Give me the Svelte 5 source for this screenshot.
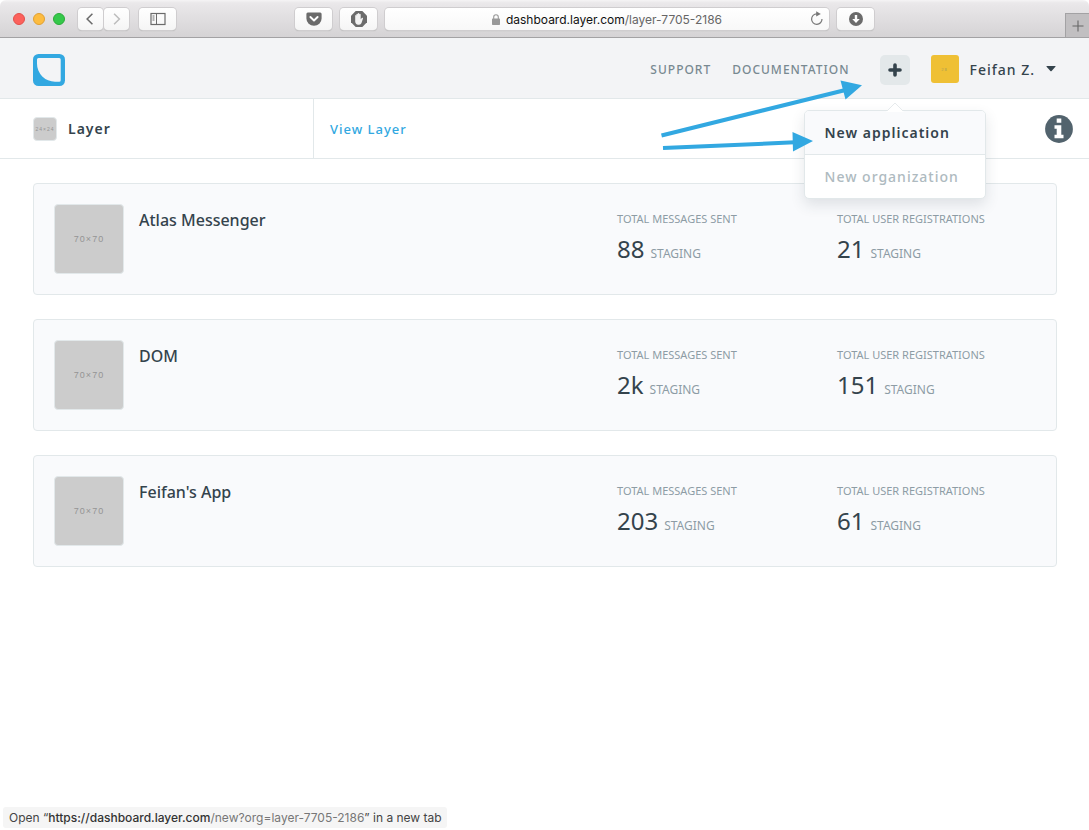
<script>
  const apps = [
    { name: 'Atlas Messenger', messages: '88', users: '21' },
    { name: 'DOM', messages: '2k', users: '151' },
    { name: "Feifan's App", messages: '203', users: '61' },
  ];
</script>

<div class="browser">
  <div class="lights">
    <span class="light red"></span>
    <span class="light amber"></span>
    <span class="light green"></span>
  </div>
  <div class="history">
    <button class="tool narrow" aria-label="Back">
      <svg width="26" height="22" viewBox="0 0 26 22"><path d="M15 5.5 9.5 11l5.5 5.5" fill="none" stroke="#6b6b6b" stroke-width="1.6" /></svg>
    </button>
    <button class="tool narrow" aria-label="Forward">
      <svg width="26" height="22" viewBox="0 0 26 22"><path d="M10.5 5.5 16 11l-5.5 5.5" fill="none" stroke="#bdbdbd" stroke-width="1.6" /></svg>
    </button>
  </div>
  <button class="tool" aria-label="Show sidebar">
    <svg width="16" height="14" viewBox="0 0 16 14"><rect x="1" y="1.5" width="14" height="11" fill="none" stroke="#6b6b6b" stroke-width="1.2" /><path d="M6.500 1.500v11M2.500 4h2M2.500 6h2M2.500 8h2" stroke="#6b6b6b" fill="none" /></svg>
  </button>
  <div class="middle">
    <button class="tool" aria-label="Save to Pocket">
      <svg width="16" height="14" viewBox="0 0 16 14"><path d="M1.800.5h12.400Q15.600.5 15.600 2v4.500a7.600 7.300 0 0 1-15.200 0V2Q.4.5 1.800.5Z" fill="#6b6b6b" /><path d="m4.400 5 3.600 3.500L11.600 5" fill="none" stroke="#fff" stroke-width="1.9" stroke-linecap="round" stroke-linejoin="round" /></svg>
    </button>
    <button class="tool" aria-label="Ad blocker">
      <svg width="16" height="16" viewBox="0 0 16 16"><path d="M4.700 0h6.600L16 4.700v6.600L11.300 16H4.700L0 11.300V4.700Z" fill="#6b6b6b" /><path d="M4.200 8.500V4.500q.6-.8 1.200 0V3.200q.7-1 1.400 0v-.7q.8-1 1.500 0v.7q.9-.8 1.400.3V8.300l1.300-1.500q1.200-.4 1 .8L10.500 12q-.6 1.800-2.400 1.800h-.9Q4.400 13.600 4.200 10.500Z" fill="#f2f2f2" /></svg>
    </button>
    <div class="address">
      <svg width="8" height="11" viewBox="0 0 8 11"><rect y="4.5" width="8" height="6.5" rx=".7" fill="#999" /><path d="M1.700 5V3a2.300 2.300 0 0 1 4.600 0v2" fill="none" stroke="#999" stroke-width="1.1" /></svg>
      <span>dashboard.layer.com<i>/layer-7705-2186</i></span>
      <button class="reload" aria-label="Reload">
        <svg width="14" height="15" viewBox="0 0 14 15"><path d="M12 8a5.200 5.200 0 1 1-5.200-5.100h1" fill="none" stroke="#777" stroke-width="1.2" /><path d="m6.200.3 4.600 2.600-4.600 2.700Z" fill="#777" /></svg>
      </button>
    </div>
    <button class="tool" aria-label="Downloads">
      <svg width="14" height="14" viewBox="0 0 14 14"><circle cx="7" cy="7" r="7" fill="#6b6b6b" /><path d="M5.800 3h2.400v4h2.600L7 11 3.200 7h2.600Z" fill="#fff" /></svg>
    </button>
  </div>
  <button class="new-tab" aria-label="New tab">
    <svg width="12" height="12" viewBox="0 0 12 12"><path d="M6 .5v11M.5 6h11" stroke="#666" stroke-width="1.1" /></svg>
  </button>
</div>

<header>
  <a class="logo" href="#home" aria-label="Layer home">
    <svg width="32" height="32" viewBox="0 0 32 32"><rect width="32" height="32" rx="5.500" fill="#32a8e1" /><path d="M5.500 4h20.700q1.500 0 1.500 1.500v20.700q0 1.500-1.500 1.500H22A18 18 0 0 1 4 9.700V5.500Q4 4 5.500 4Z" fill="#f3f4f6" /></svg>
  </a>
  <nav>
    <a href="#support">SUPPORT</a>
    <a href="#docs">DOCUMENTATION</a>
  </nav>
  <div class="create">
    <button class="plus" aria-label="Create">
      <svg width="14" height="14" viewBox="0 0 14 14"><path d="M7 2v10M2 7h10" stroke="#34434c" stroke-width="3.6" stroke-linecap="round" /></svg>
    </button>
    <div class="menu">
      <svg class="caret" width="18" height="10" viewBox="0 0 18 10"><path d="M0 10 9 1l9 9Z" fill="#fff" /><path d="m1 9 8-8 8 8" fill="none" stroke="#e6eaec" /></svg>
      <button class="item active">New application</button>
      <button class="item">New organization</button>
    </div>
    <svg class="pointers" width="204" height="76" viewBox="658 78 204 76">
      <path d="m661.500 135.500 184-45.500M663 148l132-5.700" stroke="#32a8e1" stroke-width="4" fill="none" />
      <path d="m840.500 80.500 21.500 4.700-16.500 14.300ZM792.500 132l20.500 9-20 10.500Z" fill="#32a8e1" />
    </svg>
  </div>
  <button class="account">
    <span class="avatar"><small>28</small></span>
    <span>Feifan Z.</span>
    <svg width="10" height="6" viewBox="0 0 10 6"><path d="M1 0h8q1 0 .4.800L5.600 5q-.6.600-1.200 0L.6.800Q0 0 1 0Z" fill="#34434c" /></svg>
  </button>
</header>

<div class="subbar">
  <div class="org"><span class="thumb small">24×24</span><b>Layer</b></div>
  <a class="view" href="#view">View Layer</a>
  <button class="info" aria-label="Information">
    <svg width="28" height="28" viewBox="0 0 28 28"><circle cx="14" cy="14" r="13.9" fill="#52636d" /><path d="M11.700 3.500h4.600v4.200h-4.600ZM9.500 10.200h6.800v9.600h2.200v3.500h-9v-3.500h2.200v-6.100H9.500Z" fill="#fff" /></svg>
  </button>
</div>

<main>
  {#each apps as app}
    <article>
      <span class="thumb">70×70</span>
      <h2>{app.name}</h2>
      <section><h3>TOTAL MESSAGES SENT</h3><p><strong>{app.messages}</strong>STAGING</p></section>
      <section><h3>TOTAL USER REGISTRATIONS</h3><p><strong>{app.users}</strong>STAGING</p></section>
    </article>
  {/each}
</main>

<div class="status">Open “<b>https://dashboard.layer.com</b><i>/new?org=layer-7705-2186</i>” in a new tab</div>

<style>
  :global(body) {
    margin: 0;
    background: #fff;
    color: #34434c;
    font-family: 'Noto Sans', sans-serif;
  }
  :global(*) { box-sizing: border-box; }
  svg { display: block; }
  button { font: inherit; color: inherit; border: 0; padding: 0; background: none; }
  a { text-decoration: none; }
  i { font-style: normal; }

  .browser {
    display: flex;
    align-items: center;
    height: 38px;
    padding: 1px 0 0 13px;
    border-bottom: 1px solid #a3a2a4;
    border-radius: 6px 6px 0 0;
    background: linear-gradient(#f5f4f5 0, #eae8ea 3px, #d5d3d5);
    font-family: Inter, sans-serif;
  }
  .lights { display: flex; gap: 8px; margin-right: 13px; }
  .light { width: 12px; height: 12px; border-radius: 50%; border: 1px solid; }
  .red { background: #fc615c; border-color: #e2504b; }
  .amber { background: #fdbc40; border-color: #e0a033; }
  .green { background: #35c84a; border-color: #2aab38; }
  .history { display: flex; gap: 1px; margin-right: 10px; }
  .tool {
    display: flex;
    align-items: center;
    justify-content: center;
    flex: none;
    width: 37px;
    height: 22px;
    border-radius: 4px;
    background: linear-gradient(#fff, #f5f5f5);
    box-shadow: 0 0 0 1px #cfcdcf, 0 1px 1px #aaa;
  }
  .narrow { width: 25px; }
  .middle { display: flex; flex: 1; gap: 8px; margin: 0 191px 0 119px; }
  .address {
    position: relative;
    display: flex;
    flex: 1;
    align-items: center;
    justify-content: center;
    gap: 6px;
    height: 22px;
    border-radius: 4px;
    background: linear-gradient(#fff, #f8f8f8);
    box-shadow: 0 0 0 1px #cfcdcf, 0 1px 1px #aaa;
    font-size: 12px;
    white-space: nowrap;
    color: #111;
  }
  .address i { color: #666; }
  .reload { position: absolute; right: 5px; top: 3px; }
  .new-tab {
    display: flex;
    align-items: center;
    justify-content: center;
    align-self: flex-end;
    width: 24px;
    height: 24px;
    border: 1px solid #a3a2a4;
    border-width: 1px 0 0 1px;
    background: #c1bfc1;
  }

  header {
    display: flex;
    align-items: center;
    justify-content: flex-end;
    height: 61px;
    padding: 4px 33px 0;
    background: #f3f4f6;
    border-bottom: 1px solid #e2e8ea;
  }
  .logo { margin-right: auto; }
  nav { display: flex; gap: 21px; padding-bottom: 2px; }
  nav a { font-size: 12px; font-weight: 500; letter-spacing: 1px; color: #788991; }
  .create { position: relative; z-index: 2; margin: 0 21px 0 30px; }
  .plus {
    display: flex;
    align-items: center;
    justify-content: center;
    width: 30px;
    height: 30px;
    border-radius: 5px;
    background: #e3e8ea;
  }
  .menu {
    position: absolute;
    top: 55px;
    right: -76px;
    width: 182px;
    border: 1px solid #e2e8ea;
    border-radius: 5px;
    background: #fff;
    box-shadow: 0 6px 14px rgba(50, 65, 75, 0.13);
  }
  .caret { position: absolute; top: -9px; left: 81px; }
  .item {
    display: block;
    width: 100%;
    height: 43px;
    padding: 0 20px;
    text-align: left;
    font-size: 14px;
    font-weight: 500;
    letter-spacing: 1px;
    color: #aebac0;
    white-space: nowrap;
  }
  .active {
    height: 44px;
    border-bottom: 1px solid #e2e8ea;
    border-radius: 4px 4px 0 0;
    background: #f9fafc;
    color: #34434c;
    font-weight: 600;
  }
  .pointers { position: absolute; top: 23px; right: 48px; pointer-events: none; }
  .account {
    display: flex;
    align-items: center;
    gap: 11px;
    padding-bottom: 2px;
    font-size: 14px;
    font-weight: 500;
    letter-spacing: 1px;
    white-space: nowrap;
  }
  .avatar {
    display: flex;
    align-items: center;
    justify-content: center;
    width: 28px;
    height: 28px;
    border-radius: 3px;
    background: #efc035;
    color: #b9a450;
  }
  .avatar small { font-size: 4px; }

  .subbar {
    display: flex;
    align-items: center;
    height: 60px;
    padding: 0 16px 0 33px;
    border-bottom: 1px solid #e2e8ea;
  }
  .org {
    display: flex;
    align-items: center;
    align-self: stretch;
    gap: 11px;
    width: 281px;
    border-right: 1px solid #e2e8ea;
    font-size: 14px;
    letter-spacing: 1px;
  }
  .org b { font-weight: 600; }
  .thumb {
    display: flex;
    align-items: center;
    justify-content: center;
    width: 70px;
    height: 70px;
    border: 1px solid #e2e8ea;
    border-radius: 4px;
    background: #ccc;
    color: #949494;
    font-family: 'Liberation Sans Narrow', 'Liberation Sans', sans-serif;
    font-size: 9px;
    letter-spacing: 1px;
  }
  .small { width: 24px; height: 24px; font-size: 5px; }
  .view {
    margin: 0 auto 0 16px;
    font-size: 13px;
    font-weight: 500;
    letter-spacing: 1px;
    color: #32a8e1;
  }

  main { display: grid; gap: 24px; padding: 24px 32px 24px 33px; }
  article {
    display: grid;
    grid-template-columns: 70px 1fr 220px 219px;
    padding: 20px 0 20px 20px;
    border: 1px solid #e2e8ea;
    border-radius: 4px;
    background: #f9fafc;
  }
  h2 { margin: 4px 0 0 15px; font-size: 16px; line-height: 24px; font-weight: 500; }
  h3 { margin: 7px 0 0; font-size: 11px; line-height: 16px; font-weight: 400; color: #8d9ca5; white-space: nowrap; }
  p { margin: 4px 0 0; font-size: 12px; line-height: 36px; color: #8d9ca5; }
  strong { margin-right: 6px; font-size: 24px; font-weight: 400; color: #34434c; }

  .status {
    position: fixed;
    left: 3px;
    bottom: 2px;
    padding: 0 5px 0 6px;
    border-radius: 3px;
    background: #f5f5f5;
    font-family: Inter, sans-serif;
    font-size: 12px;
    line-height: 21px;
    color: #444;
    white-space: nowrap;
  }
  .status b { font-weight: 500; color: #333; }
  .status i { color: #777; }
</style>
